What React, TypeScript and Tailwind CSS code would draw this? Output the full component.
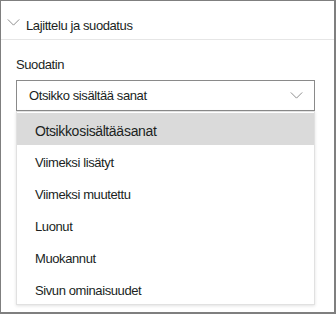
import * as React from "react";

const items = [
  "Viimeksi lisätyt",
  "Viimeksi muutettu",
  "Luonut",
  "Muokannut",
  "Sivun ominaisuudet",
];

function Chevron({ className }: { className?: string }) {
  return (
    <svg viewBox="0 0 14 8" className={className} fill="none" stroke="currentColor" strokeWidth="1.1">
      <path d="M0.5 0.5 L7 7 L13.5 0.5" />
    </svg>
  );
}

export default function App() {
  return (
    <div
      className="w-[336px] h-[314px] bg-white border-l border-t border-r-2 border-b-2 border-[#7f7f7f] overflow-hidden text-[#201f1e] tracking-[-0.4px]"
      style={{ fontFamily: '"Liberation Sans", Arial, sans-serif' }}
    >
      {/* Section header */}
      <div className="h-[39px] flex items-center pt-[11px] border-b border-[#e6e6e6]">
        <Chevron className="w-[13px] h-[7px] ml-[6px] mt-[-6px] text-[#8a8a8a]" />
        <span className="ml-[6px] text-[13px]">Lajittelu ja suodatus</span>
      </div>

      <div className="pl-[15px] pr-[19px] pt-[17px]">
        <div className="text-[13px] leading-[16px]">Suodatin</div>

        {/* Select */}
        <div className="mt-[7px] h-[31px] border border-[#8a8a8a] flex items-center justify-between pl-[12px] pr-[11px]">
          <span className="text-[13px]">Otsikko sisältää sanat</span>
          <Chevron className="w-[13px] h-[7px] text-[#8a8a8a]" />
        </div>

        {/* Menu */}
        <div className="h-[194px] border border-[#e1e1e1] shadow-[0_1px_3px_rgba(0,0,0,0.12)] pt-[1px]">
          <div className="h-[32px] bg-[#dadada] flex items-center pt-[4px] pl-[18px] text-[14px] [word-spacing:-3px]">
            Otsikko sisältää sanat
          </div>
          {items.map((t) => (
            <div key={t} className="h-[32px] flex items-center pt-[4px] pl-[18px] text-[13px]">
              {t}
            </div>
          ))}
        </div>
      </div>
    </div>
  );
}
